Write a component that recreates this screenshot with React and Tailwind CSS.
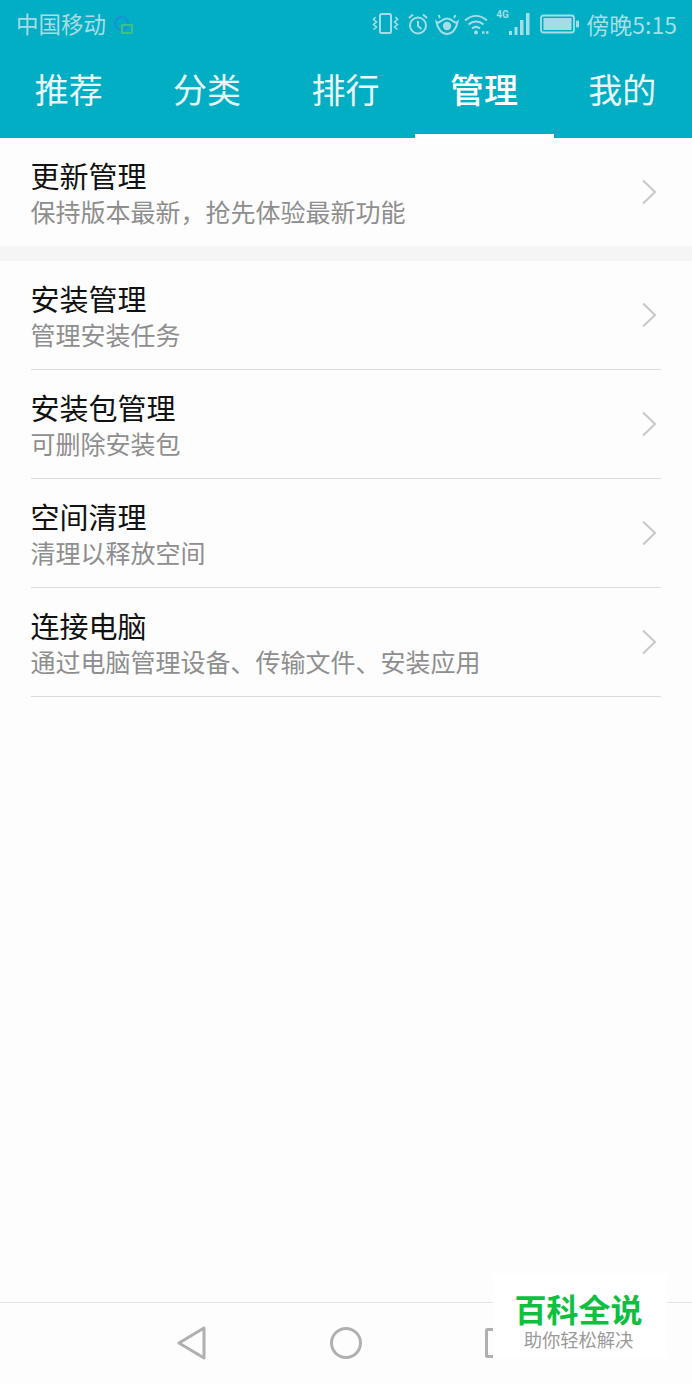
const cjk = "font-['Noto_Sans_CJK_SC','Noto_Sans',sans-serif]";

const tabs = ["推荐", "分类", "排行", "管理", "我的"];

const firstGroup = [{ title: "更新管理", desc: "保持版本最新，抢先体验最新功能" }];
const secondGroup = [
  { title: "安装管理", desc: "管理安装任务" },
  { title: "安装包管理", desc: "可删除安装包" },
  { title: "空间清理", desc: "清理以释放空间" },
  { title: "连接电脑", desc: "通过电脑管理设备、传输文件、安装应用" },
];

function StatusIcons() {
  return (
    <div className="flex items-center text-[#a5dde6]">
      {/* vibrate */}
      <svg className="w-[27px] h-[24px]" viewBox="0 0 27 24" fill="none" stroke="currentColor" strokeWidth="2">
        <rect x="8" y="2" width="11" height="19" rx="1.500" />
        <path d="M3.500 5L1.500 7.500 4.500 10 1.500 12.500 4.500 15 1.500 17.500M23.500 5l2 2.500-3 2.500 3 2.500-3 2.500 3 2.500" strokeWidth="1.600" />
      </svg>
      {/* alarm */}
      <svg className="ml-[8px] w-[22px] h-[24px]" viewBox="0 0 22 24" fill="none" stroke="currentColor" strokeWidth="2">
        <circle cx="11" cy="13.500" r="8" />
        <path d="M11 9v5l3.500 3M2 6l4-3.500M20 6l-4-3.500" />
      </svg>
      {/* eye comfort */}
      <svg className="ml-[6px] w-[24px] h-[24px]" viewBox="0 0 24 24" fill="none" stroke="currentColor" strokeWidth="2">
        <path d="M1.500 10c3 3 4.500-3.500 10.500-3.500S19.500 13 22.500 10c-1 7-5.500 12-10.500 12S2.500 17 1.500 10z" />
        <circle cx="12" cy="14" r="4.200" fill="currentColor" stroke="none" />
        <path d="M5 6L3.500 3M19 6l1.500-3" strokeWidth="1.800" />
      </svg>
      {/* wifi */}
      <svg className="ml-[5px] w-[26px] h-[24px]" viewBox="0 0 26 24" fill="none" stroke="currentColor" strokeWidth="2">
        <path d="M1 8.500c7-6 15-6 22 0M4.500 12.500c4.500-4 10.500-4 15 0M8 16.500c2.500-2 5.500-2 8 0" />
        <circle cx="12" cy="20.500" r="2" fill="currentColor" stroke="none" />
        <path d="M18 20.500h7" strokeWidth="2.400" strokeDasharray="2.500 1.500" />
      </svg>
      {/* signal */}
      <div className="relative ml-[6px] w-[34px] h-[24px]">
        <span className="absolute left-0 top-[-3px] text-[10px] leading-[12px] font-bold font-['Roboto',sans-serif]">4G</span>
        <svg className="absolute inset-0 w-[34px] h-[24px]" viewBox="0 0 34 24" fill="currentColor">
          <rect x="13" y="19" width="3" height="4" />
          <rect x="18.500" y="15" width="3" height="8" />
          <rect x="24" y="8" width="3.500" height="15" />
          <rect x="30" y="1" width="3.500" height="22" />
        </svg>
      </div>
      {/* battery */}
      <svg className="ml-[10px] w-[39px] h-[20px]" viewBox="0 0 39 20" fill="none">
        <rect x="1" y="1.500" width="33" height="17" rx="2.500" stroke="currentColor" strokeWidth="1.800" />
        <rect x="3.500" y="4" width="28" height="12" fill="currentColor" />
        <rect x="36" y="6.500" width="3" height="7" rx="1" fill="currentColor" />
      </svg>
    </div>
  );
}

function Chevron() {
  return (
    <svg className="mr-[4px] w-[16px] h-[26px]" viewBox="0 0 16 26" fill="none" stroke="#c8c8c8" strokeWidth="2">
      <path d="M2 1.500L14 13 2 24.500" />
    </svg>
  );
}

function Row({ title, desc, divider, height }) {
  return (
    <div className={`mx-[31px] flex items-center justify-between ${height} ${divider ? "border-b border-[#dcdcdc]" : ""}`}>
      <div className="flex flex-col -ml-[0.5px] pt-[2px]">
        <span className="text-[29px] leading-[36px] text-[#111111]">{title}</span>
        <span className="text-[25px] leading-[36px] text-[#8e8e8e]">{desc}</span>
      </div>
      <Chevron />
    </div>
  );
}

export default function App() {
  return (
    <div className={`relative w-[692px] h-[1384px] flex flex-col bg-[#fdfdfd] overflow-hidden ${cjk}`}>
      {/* Top bar with tabs */}
      <header className="h-[138px] shrink-0 bg-[#02aec3]">
        <div className="h-[48px] flex items-center justify-between pl-[16px] pr-[15px]">
          <div className="flex items-center">
            <span className="text-[22.500px] text-[#a5dde6]">中国移动</span>
            <span className="relative ml-[8px] w-[19px] h-[18px] mt-[2px]">
              <span className="absolute left-0 top-0 w-[15px] h-[15px] rounded-full border-2 border-[#1a8fd6]" />
              <span className="absolute right-0 bottom-0 w-[12px] h-[10px] rounded-[1px] border-2 border-[#3cc08a]" />
            </span>
          </div>
          <div className="flex items-center">
            <StatusIcons />
            <span className="ml-[7px] text-[23px] text-[#a5dde6] whitespace-nowrap">傍晚5:15</span>
          </div>
        </div>
        <nav className="h-[90px] grid grid-cols-5">
          {tabs.map((tab) => (
            <div
              key={tab}
              className={`flex items-center justify-center pb-[5px] pr-[1px] text-[34px] text-[#e8f8fa] ${
                tab === "管理" ? "border-b-4 border-white font-medium text-white" : "border-b-4 border-transparent"
              }`}
            >
              {tab}
            </div>
          ))}
        </nav>
      </header>

      {/* Menu list */}
      <section>
        {firstGroup.map((item) => (
          <Row key={item.title} {...item} height="h-[108px]" />
        ))}
      </section>
      <div className="h-[15px] bg-[#f5f5f5]" />
      <section>
        {secondGroup.map((item) => (
          <Row key={item.title} {...item} divider height="h-[109px]" />
        ))}
      </section>

      {/* System navigation */}
      <footer className="mt-auto h-[82px] border-t border-[#e2e2e2] flex items-center justify-center gap-[123px] pb-[1px]">
        <svg className="w-[30px] h-[34px]" viewBox="0 0 30 34" fill="none" stroke="#b0b0b0" strokeWidth="3" strokeLinejoin="round">
          <path d="M27 2v30L2 17z" />
        </svg>
        <svg className="w-[32px] h-[32px]" viewBox="0 0 32 32" fill="none" stroke="#b0b0b0" strokeWidth="3">
          <circle cx="16" cy="16" r="14.500" />
        </svg>
        <svg className="w-[30px] h-[30px]" viewBox="0 0 30 30" fill="none" stroke="#b0b0b0" strokeWidth="3">
          <rect x="1.500" y="1.500" width="27" height="27" rx="1" />
        </svg>
      </footer>

      {/* Site badge over the nav bar */}
      <div className="absolute left-[493px] top-[1274px] w-[174px] h-[84px] bg-white flex flex-col items-center pt-[14px] pr-[3px]">
        <span className="text-[32px] leading-[40px] font-bold text-[#0fbf3f]">百科全说</span>
        <span className="text-[18.300px] leading-[22px] text-[#9a9a9a]">助你轻松解决</span>
      </div>
    </div>
  );
}
